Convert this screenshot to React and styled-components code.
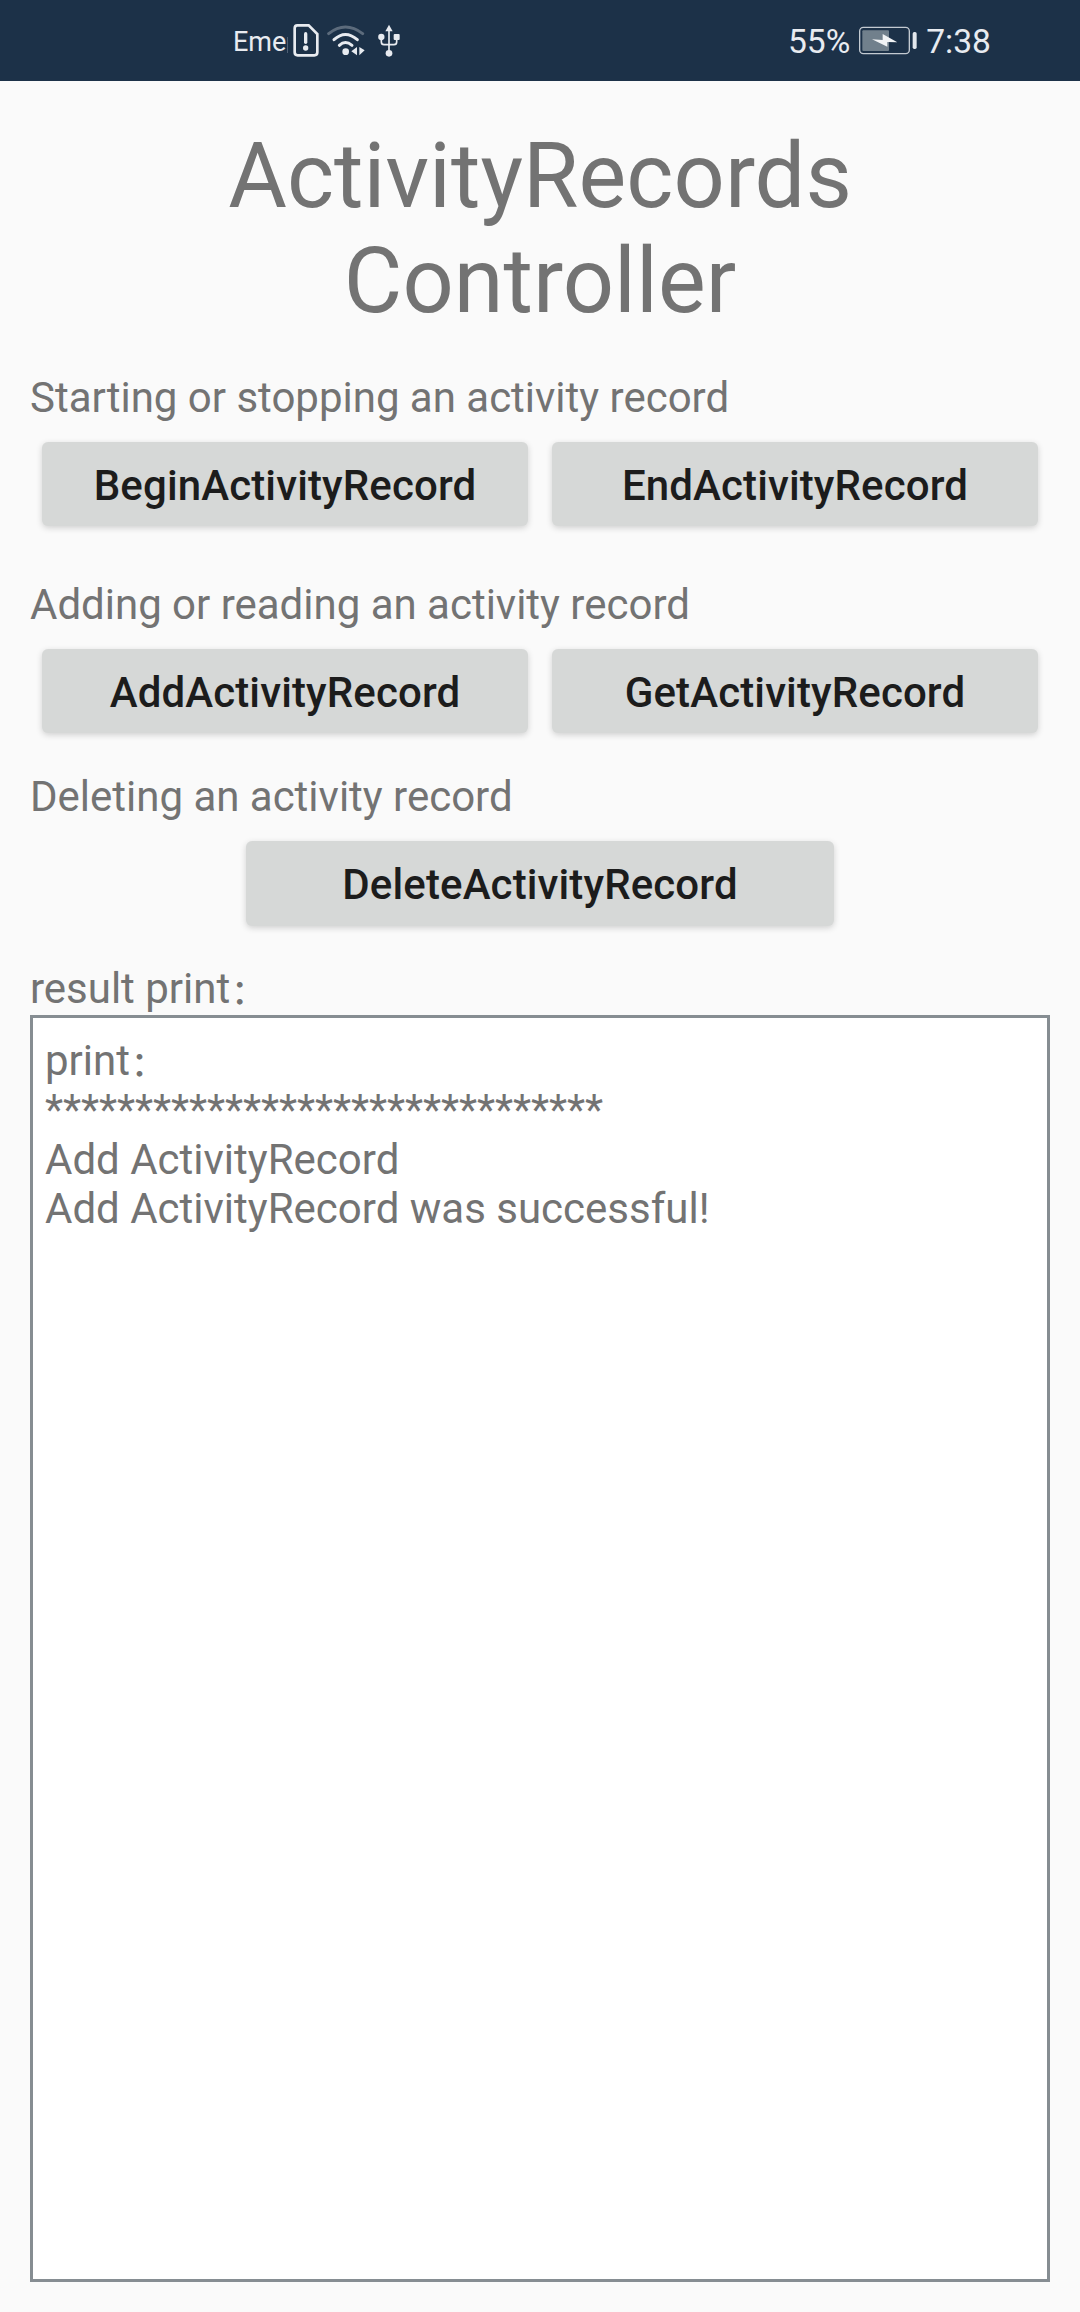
import React from "react";
import styled, { createGlobalStyle } from "styled-components";

const GlobalStyle = createGlobalStyle`
  * { box-sizing: border-box; }
  body {
    margin: 0;
    background: #fafafa;
    font-family: Roboto, "Noto Sans CJK SC", sans-serif;
  }
`;

const Screen = styled.div`
  display: flex;
  flex-direction: column;
  width: 1080px;
  height: 2312px;
  background: #fafafa;
`;

const StatusBar = styled.header`
  display: flex;
  flex: none;
  justify-content: space-between;
  align-items: center;
  height: 81px;
  padding: 0 89px 0 233px;
  background: #1c3148;
  color: #e8ebf0;
`;

const StatusGroup = styled.div`
  display: flex;
  align-items: center;
`;

const Carrier = styled.span`
  width: 55px;
  padding-top: 2px;
  border-right: 1px solid transparent;
  border-image: linear-gradient(transparent 40%, #4f6074 40%, #4f6074 84%, transparent 84%) 1;
  font-size: 27px;
  line-height: 32px;
  white-space: nowrap;
`;

const StatusText = styled.span`
  padding-top: 2px;
  font-size: 33.6px;
  line-height: 39px;
  white-space: nowrap;
`;

const Icon = styled.svg`
  display: block;
  flex: none;
  width: ${(p) => p.$width}px;
  height: 33px;
  margin-left: ${(p) => p.$gap}px;
  margin-right: ${(p) => p.$after || 0}px;
`;

const Content = styled.main`
  display: flex;
  flex: 1;
  flex-direction: column;
  padding: 43px 30px 30px;
`;

const Title = styled.h1`
  margin: 0 0 39px;
  color: #737373;
  font-size: 90px;
  font-weight: 400;
  letter-spacing: 0.04px;
  line-height: 105px;
  text-align: center;
`;

const Section = styled.section`
  display: flex;
  flex-direction: column;
  margin-bottom: ${(p) => p.$after}px;
`;

const Label = styled.p`
  margin: 0;
  color: #737373;
  font-size: 42px;
  letter-spacing: -0.01px;
  line-height: 49px;
`;

const ButtonRow = styled.div`
  display: flex;
  justify-content: center;
  gap: 24px;
  margin-top: 20px;
  padding: 0 12px;
`;

const Button = styled.button`
  flex: ${(p) => (p.$width ? "none" : "1 1 0")};
  width: ${(p) => (p.$width ? `${p.$width}px` : "auto")};
  height: ${(p) => p.$height || 84}px;
  padding: 2px 0 0;
  border: 0;
  border-radius: 6px;
  background: #d6d8d7;
  box-shadow: 0 2px 6px rgba(0, 0, 0, 0.17);
  color: #1c1c1c;
  font-family: inherit;
  font-size: 42px;
  font-weight: 500;
  letter-spacing: 0.12px;
  line-height: 49px;
`;

const Output = styled.div`
  flex: 1;
  margin-top: 2px;
  padding: 18px 12px;
  border: 3px solid #868d92;
  background: #fff;
`;

const OutputLine = styled.p`
  margin: 0;
  color: #737373;
  font-size: 42px;
  letter-spacing: ${(p) => p.$tracking || 0}px;
  line-height: 49.3px;
`;

const WideColon = styled.span`
  margin-left: 1px;
  font-size: 34px;
  font-weight: 500;
  line-height: 0;
  vertical-align: -1px;
`;

const SimAlertIcon = () => (
  <Icon $width={26} $gap={5} viewBox="219 72 78 99" fill="none">
    <path
      d="M232 76H266L292 102V157Q292 166 283 166H233Q224 166 224 157V85Q224 76 232 76Z"
      stroke="#e8ebf0"
      strokeWidth="8"
    />
    <path d="M257 101V127" stroke="#e8ebf0" strokeWidth="10" strokeLinecap="round" />
    <circle cx="257" cy="144" r="8" fill="#e8ebf0" />
  </Icon>
);

const WifiIcon = () => (
  <Icon $width={40} $gap={7} viewBox="318 72 120 99" fill="none" strokeLinecap="round">
    <path d="M326 101Q376 61 428 101" stroke="#5c6b7c" strokeWidth="9" />
    <path d="M342 119Q376 88 412 119" stroke="#e8ebf0" strokeWidth="9" />
    <path d="M358 136Q376 119 396 136" stroke="#e8ebf0" strokeWidth="9" />
    <circle cx="377" cy="155" r="10" fill="#e8ebf0" />
    <path d="M411 141V166L394 154ZM418 141L434 151L418 166Z" fill="#e8ebf0" />
  </Icon>
);

const UsbIcon = () => (
  <Icon $width={22} $gap={12} viewBox="474 72 66 99" fill="none">
    <path d="M507 88V158M484 112V126Q484 134 492 134H522Q530 134 530 126V112" stroke="#e8ebf0" strokeWidth="5" />
    <path d="M507 74L518 94H496Z" fill="#e8ebf0" />
    <circle cx="484" cy="111" r="9.5" fill="#e8ebf0" />
    <rect x="521" y="102" width="18" height="18" rx="3" fill="#e8ebf0" />
    <circle cx="507" cy="160" r="10" fill="#e8ebf0" />
  </Icon>
);

const BatteryIcon = () => (
  <Icon $width={58} $gap={9} $after={9} viewBox="267 72 174 99" fill="none">
    <rect x="269" y="82" width="149" height="79" rx="11" stroke="#c3cad1" strokeWidth="4" />
    <rect x="277" y="91" width="80" height="62" rx="3" fill="#71808c" />
    <path d="M306 118L338 120V102L382 127L352 126V140Z" fill="#f1f3f5" />
    <rect x="428" y="96" width="12" height="51" rx="5" fill="#e3e7ec" />
  </Icon>
);

export default function App() {
  return (
    <Screen>
      <GlobalStyle />
      <StatusBar>
        <StatusGroup>
          <Carrier>Eme</Carrier>
          <SimAlertIcon />
          <WifiIcon />
          <UsbIcon />
        </StatusGroup>
        <StatusGroup>
          <StatusText>55%</StatusText>
          <BatteryIcon />
          <StatusText>7:38</StatusText>
        </StatusGroup>
      </StatusBar>
      <Content>
        <Title>
          ActivityRecords
          <br />
          Controller
        </Title>
        <Section $after={54}>
          <Label>Starting or stopping an activity record</Label>
          <ButtonRow>
            <Button>BeginActivityRecord</Button>
            <Button>EndActivityRecord</Button>
          </ButtonRow>
        </Section>
        <Section $after={39}>
          <Label>Adding or reading an activity record</Label>
          <ButtonRow>
            <Button>AddActivityRecord</Button>
            <Button>GetActivityRecord</Button>
          </ButtonRow>
        </Section>
        <Section $after={38}>
          <Label>Deleting an activity record</Label>
          <ButtonRow>
            <Button $width={588} $height={85}>DeleteActivityRecord</Button>
          </ButtonRow>
        </Section>
        <Label>
          result print<WideColon>：</WideColon>
        </Label>
        <Output>
          <OutputLine>
            print<WideColon>：</WideColon>
          </OutputLine>
          <OutputLine $tracking={-0.09}>*******************************</OutputLine>
          <OutputLine>Add ActivityRecord</OutputLine>
          <OutputLine>Add ActivityRecord was successful!</OutputLine>
        </Output>
      </Content>
    </Screen>
  );
}
